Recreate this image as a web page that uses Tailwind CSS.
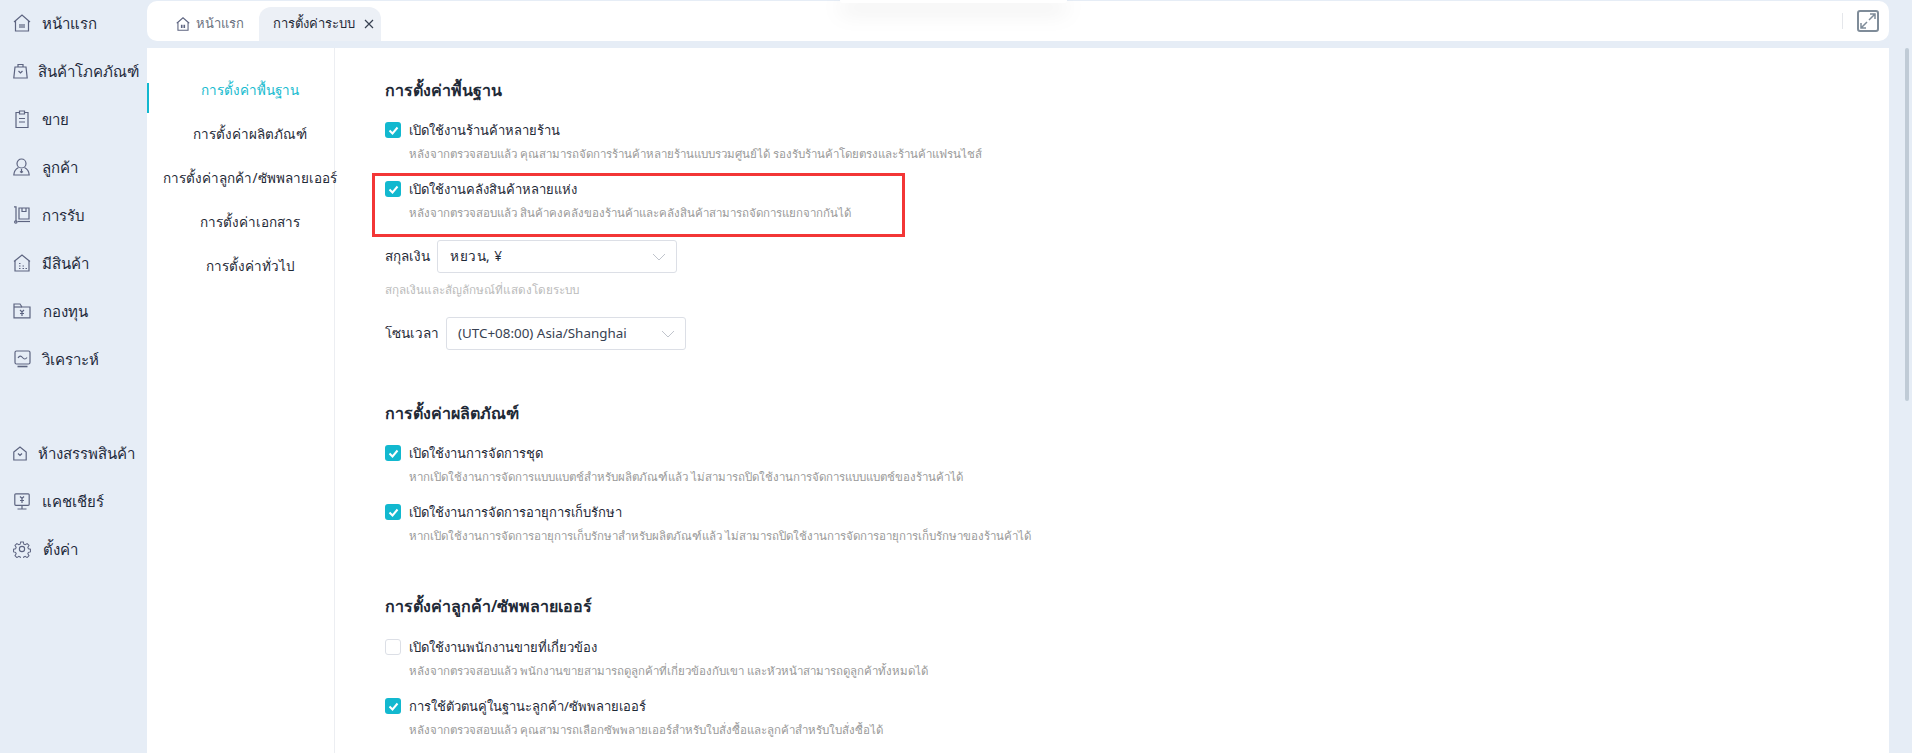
<!DOCTYPE html>
<html lang="th">
<head>
  <meta charset="UTF-8" />
  <title>การตั้งค่าระบบ</title>
  <script src="https://cdn.jsdelivr.net/npm/@tailwindcss/browser@4"></script>
</head>
<body class="h-[753px] overflow-hidden bg-[#e6edf6] text-[#1f2a37] font-['Noto_Sans','Liberation_Sans',sans-serif]">
<div class="relative flex h-[753px]">

  <!-- sidebar -->
  <aside class="w-[147px] shrink-0 -mt-[1px] text-[15px] text-[#1f2a3c]">
    <nav class="flex flex-col">
      <a class="flex h-[48px] items-center pl-[13px] gap-[11px]">
        <svg class="w-[18px] h-[18px] shrink-0" viewBox="0 0 18 18" fill="none" stroke="#5d6480" stroke-width="1.2"><path d="M1 8 9 1l8 7"/><path d="M2.5 7v10h13V7"/><path d="M7 10v4M9 10v4M11 10v4"/></svg>
        <span>หน้าแรก</span>
      </a>
      <a class="flex h-[48px] items-center pl-[13px] gap-[10px]">
        <svg class="w-[15px] h-[16px] shrink-0" viewBox="0 0 15 16" fill="none" stroke="#5d6480" stroke-width="1.2"><path d="M2 4h11l1.2 11H.8z"/><path d="M5 4V1.5h5V4"/><path d="M5.5 8 7.5 10 9.5 8"/></svg>
        <span class="whitespace-nowrap">สินค้าโภคภัณฑ์</span>
      </a>
      <a class="flex h-[48px] items-center pl-[15px] gap-[13px]">
        <svg class="w-[14px] h-[18px] shrink-0" viewBox="0 0 14 18" fill="none" stroke="#5d6480" stroke-width="1.2"><path d="M4 2.5H1v15h12v-15h-3"/><path d="M4.5 1h5v3h-5z"/><path d="M4 8.5h6M4 12h6"/></svg>
        <span>ขาย</span>
      </a>
      <a class="flex h-[48px] items-center pl-[13px] gap-[12px]">
        <svg class="w-[17px] h-[18px] shrink-0" viewBox="0 0 17 18" fill="none" stroke="#5d6480" stroke-width="1.2"><circle cx="8.5" cy="5.5" r="4.5"/><path d="M5.5 9.5C2.5 11 1 13 .8 17h15.4c-.2-4-1.7-6-4.7-7.5"/><path d="M8.5 11v3.5M7 13.500l1.5 1 1.5-1"/></svg>
        <span>ลูกค้า</span>
      </a>
      <a class="flex h-[48px] items-center pl-[13px] gap-[11px]">
        <svg class="w-[18px] h-[18px] shrink-0" viewBox="0 0 18 18" fill="none" stroke="#5d6480" stroke-width="1.2"><path d="M1 .8h2v14.500"/><path d="M6 2h10v11H6z"/><path d="M9 2v3.500h4V2"/><path d="M4.500 15.500H17"/><circle cx="2.800" cy="16" r="1.200"/></svg>
        <span>การรับ</span>
      </a>
      <a class="flex h-[48px] items-center pl-[13px] gap-[11px]">
        <svg class="w-[18px] h-[18px] shrink-0" viewBox="0 0 18 18" fill="none" stroke="#5d6480" stroke-width="1.2"><path d="M1 7.500 9 1l8 6.500"/><path d="M2 7v10h14V7"/><path d="M6 9.500h1.500M6 12h1.500M6 14.500h1.500M9.500 12H11M9.500 14.500H11M12.500 14.500H14"/></svg>
        <span>มีสินค้า</span>
      </a>
      <a class="flex h-[48px] items-center pl-[13px] gap-[12px]">
        <svg class="w-[18px] h-[16px] shrink-0" viewBox="0 0 18 16" fill="none" stroke="#5d6480" stroke-width="1.2"><path d="M1 14.800V1h6l2 3h8v10.800z"/><path d="M1 4h8"/><path d="M7 7l2 2 2-2M9 9v4M7 10.500h4"/></svg>
        <span>กองทุน</span>
      </a>
      <a class="flex h-[48px] items-center pl-[14px] gap-[11px]">
        <svg class="w-[17px] h-[18px] shrink-0" viewBox="0 0 17 18" fill="none" stroke="#5d6480" stroke-width="1.2"><rect x="1" y="1" width="15" height="13" rx="1.500"/><path d="M4 8c1.500-2.500 3-2.500 4.500-.5S11.500 9.500 13 7.500"/><path d="M3.500 16.500h10" stroke-width="1.600"/></svg>
        <span>วิเคราะห์</span>
      </a>
    </nav>
    <nav class="flex flex-col mt-[46px]">
      <a class="flex h-[48px] items-center pl-[13px] gap-[11px]">
        <svg class="w-[14px] h-[15px] shrink-0" viewBox="0 0 14 15" fill="none" stroke="#5d6480" stroke-width="1.200"><path d="M.8 6 7 1l6.200 5v8H.8z"/><path d="M5 7.500 7 9.500 9 7.500"/></svg>
        <span class="whitespace-nowrap">ห้างสรรพสินค้า</span>
      </a>
      <a class="flex h-[48px] items-center pl-[14px] gap-[12px]">
        <svg class="w-[16px] h-[17px] shrink-0" viewBox="0 0 16 17" fill="none" stroke="#5d6480" stroke-width="1.200"><rect x=".8" y=".8" width="14.400" height="11.500" rx="1"/><path d="M8 12.500V16M3.500 16h9"/><path d="M6 3.500l2 2 2-2M8 5.500v4.500M6 7.500h4"/></svg>
        <span>แคชเชียร์</span>
      </a>
      <a class="flex h-[48px] items-center pl-[13px] gap-[12px]">
        <svg class="w-[18px] h-[18px] shrink-0" viewBox="0 0 24 24" fill="none" stroke="#5d6480" stroke-width="1.500"><circle cx="12" cy="12" r="3.500"/><path d="M10 1.500h4l.7 3.300 2 .9 2.900-1.800 2.800 2.800-1.800 2.900.9 2 3 .7v4l-3 .7-.9 2 1.800 2.900-2.800 2.800-2.900-1.800-2 .9-.7 2.600h-4l-.7-2.600-2-.9-2.900 1.800-2.800-2.800 1.800-2.900-.9-2-3-.7v-4l3-.7.9-2-1.800-2.900 2.800-2.800 2.900 1.800 2-.9z" transform="translate(1.200 1.200) scale(.9)"/></svg>
        <span>ตั้งค่า</span>
      </a>
    </nav>
  </aside>

  <!-- right side -->
  <div class="flex-1 min-w-0 flex flex-col pr-[23px]">
    <!-- tabs -->
    <header class="mt-[1px] h-[40px] flex items-end rounded-[10px] bg-white pl-[29px] pr-[10px] text-[13px]">
      <div class="flex h-[34px] w-[83px] items-center gap-[6px] text-[#6b7280]">
        <svg class="w-[14px] h-[14px] shrink-0" viewBox="0 0 18 18" fill="none" stroke="#5d6480" stroke-width="1.400"><path d="M1 8 9 1l8 7"/><path d="M2.500 7v10h13V7"/><path d="M7 10v4M9 10v4M11 10v4"/></svg>
        <span>หน้าแรก</span>
      </div>
      <div class="flex h-[34px] w-[122px] items-center rounded-t-[12px] bg-[#ecf0f6] pl-[14px] text-[#1f2a37]">
        <span class="whitespace-nowrap">การตั้งค่าระบบ</span>
        <svg class="ml-[9px] w-[10px] h-[10px]" viewBox="0 0 10 10" stroke="#374151" stroke-width="1.200"><path d="M1 1l8 8M9 1l-8 8"/></svg>
      </div>
      <div class="ml-auto flex h-full items-center gap-[14px]">
        <div class="h-[16px] w-px bg-[#e5e7eb]"></div>
        <div class="flex h-[22px] w-[22px] items-center justify-center rounded-[3px] border-2 border-[#7f8c99]">
          <svg class="w-[16px] h-[16px]" viewBox="0 0 16 16" fill="none" stroke="#7f8c99" stroke-width="1.500"><path d="M9 7l6-6M10 1h5v5M7 9l-6 6M1 10v5h5"/></svg>
        </div>
      </div>
    </header>

    <!-- body -->
    <div class="mt-[7px] flex flex-1 min-h-0 overflow-hidden bg-white">
      <nav class="relative w-[188px] shrink-0 border-r border-[#eceef2] pt-[20px] pl-[19px] text-[13.5px]">
        <div class="absolute left-0 top-[35px] h-[30px] w-[2px] bg-[#12b8cf]"></div>
        <div class="flex h-[44px] items-center justify-center whitespace-nowrap text-[#17bbcf]">การตั้งค่าพื้นฐาน</div>
        <div class="flex h-[44px] items-center justify-center whitespace-nowrap">การตั้งค่าผลิตภัณฑ์</div>
        <div class="flex h-[44px] items-center justify-center whitespace-nowrap">การตั้งค่าลูกค้า/ซัพพลายเออร์</div>
        <div class="flex h-[44px] items-center justify-center whitespace-nowrap">การตั้งค่าเอกสาร</div>
        <div class="flex h-[44px] items-center justify-center whitespace-nowrap">การตั้งค่าทั่วไป</div>
      </nav>

      <main class="flex-1 min-w-0 pl-[50px] pt-[30px]">
        <section class="mb-[51px]">
          <h2 class="mb-[20px] h-[24px] leading-[24px] text-[16px] font-semibold">การตั้งค่าพื้นฐาน</h2>
          <div class="flex h-[59px] gap-[8px]">
            <span class="flex h-[16px] w-[16px] shrink-0 items-center justify-center rounded-[3px] bg-[#12b8cf]"><svg class="w-[11px] h-[11px]" viewBox="0 0 11 11" fill="none" stroke="#fff" stroke-width="2"><path d="M1.500 5.500 4.500 8.500 9.500 2.500"/></svg></span>
            <div>
              <div class="h-[16px] leading-[16px] text-[13px]">เปิดใช้งานร้านค้าหลายร้าน</div>
              <div class="mt-[8px] leading-[16px] text-[11.5px] text-[#999]">หลังจากตรวจสอบแล้ว คุณสามารถจัดการร้านค้าหลายร้านแบบรวมศูนย์ได้ รองรับร้านค้าโดยตรงและร้านค้าแฟรนไชส์</div>
            </div>
          </div>
          <div class="flex h-[59px] gap-[8px]">
            <span class="flex h-[16px] w-[16px] shrink-0 items-center justify-center rounded-[3px] bg-[#12b8cf]"><svg class="w-[11px] h-[11px]" viewBox="0 0 11 11" fill="none" stroke="#fff" stroke-width="2"><path d="M1.500 5.500 4.500 8.500 9.500 2.500"/></svg></span>
            <div>
              <div class="h-[16px] leading-[16px] text-[13px]">เปิดใช้งานคลังสินค้าหลายแห่ง</div>
              <div class="mt-[8px] leading-[16px] text-[11.5px] text-[#999]">หลังจากตรวจสอบแล้ว สินค้าคงคลังของร้านค้าและคลังสินค้าสามารถจัดการแยกจากกันได้</div>
            </div>
          </div>
          <div class="flex items-center gap-[7px] text-[13.5px]">
            <label class="whitespace-nowrap">สกุลเงิน</label>
            <div class="flex h-[33px] w-[240px] items-center justify-between rounded-[3px] border border-[#dcdfe6] pl-[12px] pr-[10px]">
              <span class="tracking-[0.5px]">หยวน, ¥</span>
              <svg class="w-[14px] h-[8px]" viewBox="0 0 14 8" fill="none" stroke="#c0c4cc"><path d="M1 1l6 6 6-6"/></svg>
            </div>
          </div>
          <div class="mt-[6px] h-[20px] leading-[20px] text-[11.7px] text-[#bbb]">สกุลเงินและสัญลักษณ์ที่แสดงโดยระบบ</div>
          <div class="mt-[18px] flex items-center gap-[7px] text-[13.5px]">
            <label class="whitespace-nowrap">โซนเวลา</label>
            <div class="flex h-[33px] w-[240px] items-center justify-between rounded-[3px] border border-[#dcdfe6] pl-[11px] pr-[10px]">
              <span class="text-[13.4px] text-[#374151]">(UTC+08:00) Asia/Shanghai</span>
              <svg class="w-[14px] h-[8px]" viewBox="0 0 14 8" fill="none" stroke="#c0c4cc"><path d="M1 1l6 6 6-6"/></svg>
            </div>
          </div>
        </section>

        <section class="mb-[31px]">
          <h2 class="mb-[20px] h-[24px] leading-[24px] text-[16px] font-semibold">การตั้งค่าผลิตภัณฑ์</h2>
          <div class="flex h-[59px] gap-[8px]">
            <span class="flex h-[16px] w-[16px] shrink-0 items-center justify-center rounded-[3px] bg-[#12b8cf]"><svg class="w-[11px] h-[11px]" viewBox="0 0 11 11" fill="none" stroke="#fff" stroke-width="2"><path d="M1.500 5.500 4.500 8.500 9.500 2.500"/></svg></span>
            <div>
              <div class="h-[16px] leading-[16px] text-[13px]">เปิดใช้งานการจัดการชุด</div>
              <div class="mt-[8px] leading-[16px] text-[11.5px] text-[#999]">หากเปิดใช้งานการจัดการแบบแบตช์สำหรับผลิตภัณฑ์แล้ว ไม่สามารถปิดใช้งานการจัดการแบบแบตช์ของร้านค้าได้</div>
            </div>
          </div>
          <div class="flex h-[59px] gap-[8px]">
            <span class="flex h-[16px] w-[16px] shrink-0 items-center justify-center rounded-[3px] bg-[#12b8cf]"><svg class="w-[11px] h-[11px]" viewBox="0 0 11 11" fill="none" stroke="#fff" stroke-width="2"><path d="M1.500 5.500 4.500 8.500 9.500 2.500"/></svg></span>
            <div>
              <div class="h-[16px] leading-[16px] text-[13px]">เปิดใช้งานการจัดการอายุการเก็บรักษา</div>
              <div class="mt-[8px] leading-[16px] text-[11.5px] text-[#999]">หากเปิดใช้งานการจัดการอายุการเก็บรักษาสำหรับผลิตภัณฑ์แล้ว ไม่สามารถปิดใช้งานการจัดการอายุการเก็บรักษาของร้านค้าได้</div>
            </div>
          </div>
        </section>

        <section>
          <h2 class="mb-[21px] h-[24px] leading-[24px] text-[16px] font-semibold">การตั้งค่าลูกค้า/ซัพพลายเออร์</h2>
          <div class="flex h-[59px] gap-[8px]">
            <span class="h-[16px] w-[16px] shrink-0 rounded-[3px] border border-[#dcdfe6] bg-white"></span>
            <div>
              <div class="h-[16px] leading-[16px] text-[13px]">เปิดใช้งานพนักงานขายที่เกี่ยวข้อง</div>
              <div class="mt-[8px] leading-[16px] text-[11.5px] text-[#999]">หลังจากตรวจสอบแล้ว พนักงานขายสามารถดูลูกค้าที่เกี่ยวข้องกับเขา และหัวหน้าสามารถดูลูกค้าทั้งหมดได้</div>
            </div>
          </div>
          <div class="flex h-[59px] gap-[8px]">
            <span class="flex h-[16px] w-[16px] shrink-0 items-center justify-center rounded-[3px] bg-[#12b8cf]"><svg class="w-[11px] h-[11px]" viewBox="0 0 11 11" fill="none" stroke="#fff" stroke-width="2"><path d="M1.500 5.500 4.500 8.500 9.500 2.500"/></svg></span>
            <div>
              <div class="h-[16px] leading-[16px] text-[13px]">การใช้ตัวตนคู่ในฐานะลูกค้า/ซัพพลายเออร์</div>
              <div class="mt-[8px] leading-[16px] text-[11.5px] text-[#999]">หลังจากตรวจสอบแล้ว คุณสามารถเลือกซัพพลายเออร์สำหรับใบสั่งซื้อและลูกค้าสำหรับใบสั่งซื้อได้</div>
            </div>
          </div>
        </section>
      </main>
    </div>
  </div>

  <!-- scrollbar -->
  <div class="absolute right-[3px] top-[48px] h-[353px] w-[4px] rounded-full bg-[#c0cbd6]"></div>

  <!-- red highlight drawn over the page -->
  <div class="absolute left-[372px] top-[173px] h-[64px] w-[533px] border-[3px] border-[#f33636]"></div>

  <!-- popup sliding in from the top edge -->
  <div class="absolute left-[840px] top-0 h-[3px] w-[227px] rounded-b-[5px] bg-white shadow-[0_6px_22px_rgba(0,0,0,0.28)]"></div>
</div>
</body>
</html>
